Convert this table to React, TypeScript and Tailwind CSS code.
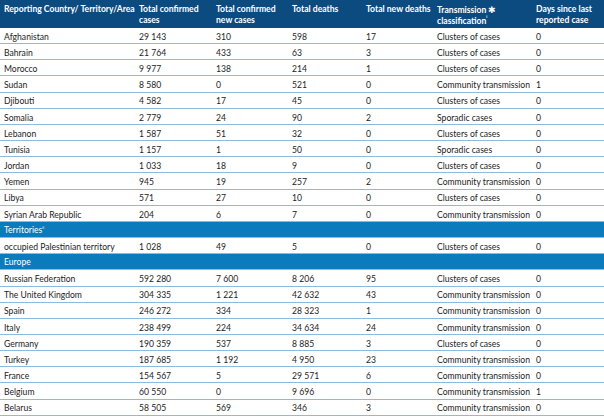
const cols = "grid grid-cols-[135px_77px_76px_74px_71px_99px_1fr]";

type Row = [string, string, string, string, string, string, string];

const top: Row[] = [
  ["Afghanistan", "29 143", "310", "598", "17", "Clusters of cases", "0"],
  ["Bahrain", "21 764", "433", "63", "3", "Clusters of cases", "0"],
  ["Morocco", "9 977", "138", "214", "1", "Clusters of cases", "0"],
  ["Sudan", "8 580", "0", "521", "0", "Community transmission", "1"],
  ["Djibouti", "4 582", "17", "45", "0", "Clusters of cases", "0"],
  ["Somalia", "2 779", "24", "90", "2", "Sporadic cases", "0"],
  ["Lebanon", "1 587", "51", "32", "0", "Clusters of cases", "0"],
  ["Tunisia", "1 157", "1", "50", "0", "Sporadic cases", "0"],
  ["Jordan", "1 033", "18", "9", "0", "Clusters of cases", "0"],
  ["Yemen", "945", "19", "257", "2", "Community transmission", "0"],
  ["Libya", "571", "27", "10", "0", "Clusters of cases", "0"],
  ["Syrian Arab Republic", "204", "6", "7", "0", "Community transmission", "0"],
];

const territories: Row[] = [
  ["occupied Palestinian territory", "1 028", "49", "5", "0", "Clusters of cases", "0"],
];

const europe: Row[] = [
  ["Russian Federation", "592 280", "7 600", "8 206", "95", "Clusters of cases", "0"],
  ["The United Kingdom", "304 335", "1 221", "42 632", "43", "Community transmission", "0"],
  ["Spain", "246 272", "334", "28 323", "1", "Community transmission", "0"],
  ["Italy", "238 499", "224", "34 634", "24", "Community transmission", "0"],
  ["Germany", "190 359", "537", "8 885", "3", "Clusters of cases", "0"],
  ["Turkey", "187 685", "1 192", "4 950", "23", "Community transmission", "0"],
  ["France", "154 567", "5", "29 571", "6", "Community transmission", "0"],
  ["Belgium", "60 550", "0", "9 696", "0", "Community transmission", "1"],
  ["Belarus", "58 505", "569", "346", "3", "Community transmission", "0"],
];

function DataRow({ row }: { row: Row }) {
  return (
    <div className={`${cols} h-[16.17px] pt-[3px] items-center border-b-[1.5px] border-[#8dbbe0] text-[#1c1c1c]`}>
      {row.map((c, i) => (
        <div key={i} className="pl-[4px] whitespace-nowrap leading-none">{c}</div>
      ))}
    </div>
  );
}

function Section({ children }: { children: React.ReactNode }) {
  return (
    <div className="h-[16.17px] pt-[2px] flex items-center pl-[4px] bg-[#0a7bbd] text-white leading-none border-b-[1.5px] border-[#8dbbe0]">
      {children}
    </div>
  );
}

export default function App() {
  return (
    <div className="w-[604px] h-[416px] overflow-hidden bg-white text-[8.6px]" style={{ fontFamily: "Lato, 'Noto Sans', sans-serif" }}>
      <div className={`${cols} h-[28px] bg-[#0c4b80] text-white font-bold leading-[11px] pt-[4px]`}>
        <div className="pl-[4px] whitespace-nowrap">Reporting Country/ Territory/Area</div>
        <div className="pl-[4px]">Total confirmed<br />cases</div>
        <div className="pl-[4px]">Total confirmed<br />new cases</div>
        <div className="pl-[4px]">Total deaths</div>
        <div className="pl-[4px] whitespace-nowrap">Total new deaths</div>
        <div className="pl-[4px] whitespace-nowrap">
          Transmission <span className="text-[9px] font-normal">✱</span>
          <br />
          classification<sup className="text-[4px] align-super">i</sup>
        </div>
        <div className="pl-[4px]">Days since last<br />reported case</div>
      </div>
      {top.map((r) => <DataRow key={r[0]} row={r} />)}
      <Section>Territories<sup className="text-[4px]">ii</sup></Section>
      {territories.map((r) => <DataRow key={r[0]} row={r} />)}
      <Section>Europe</Section>
      {europe.map((r) => <DataRow key={r[0]} row={r} />)}
    </div>
  );
}
